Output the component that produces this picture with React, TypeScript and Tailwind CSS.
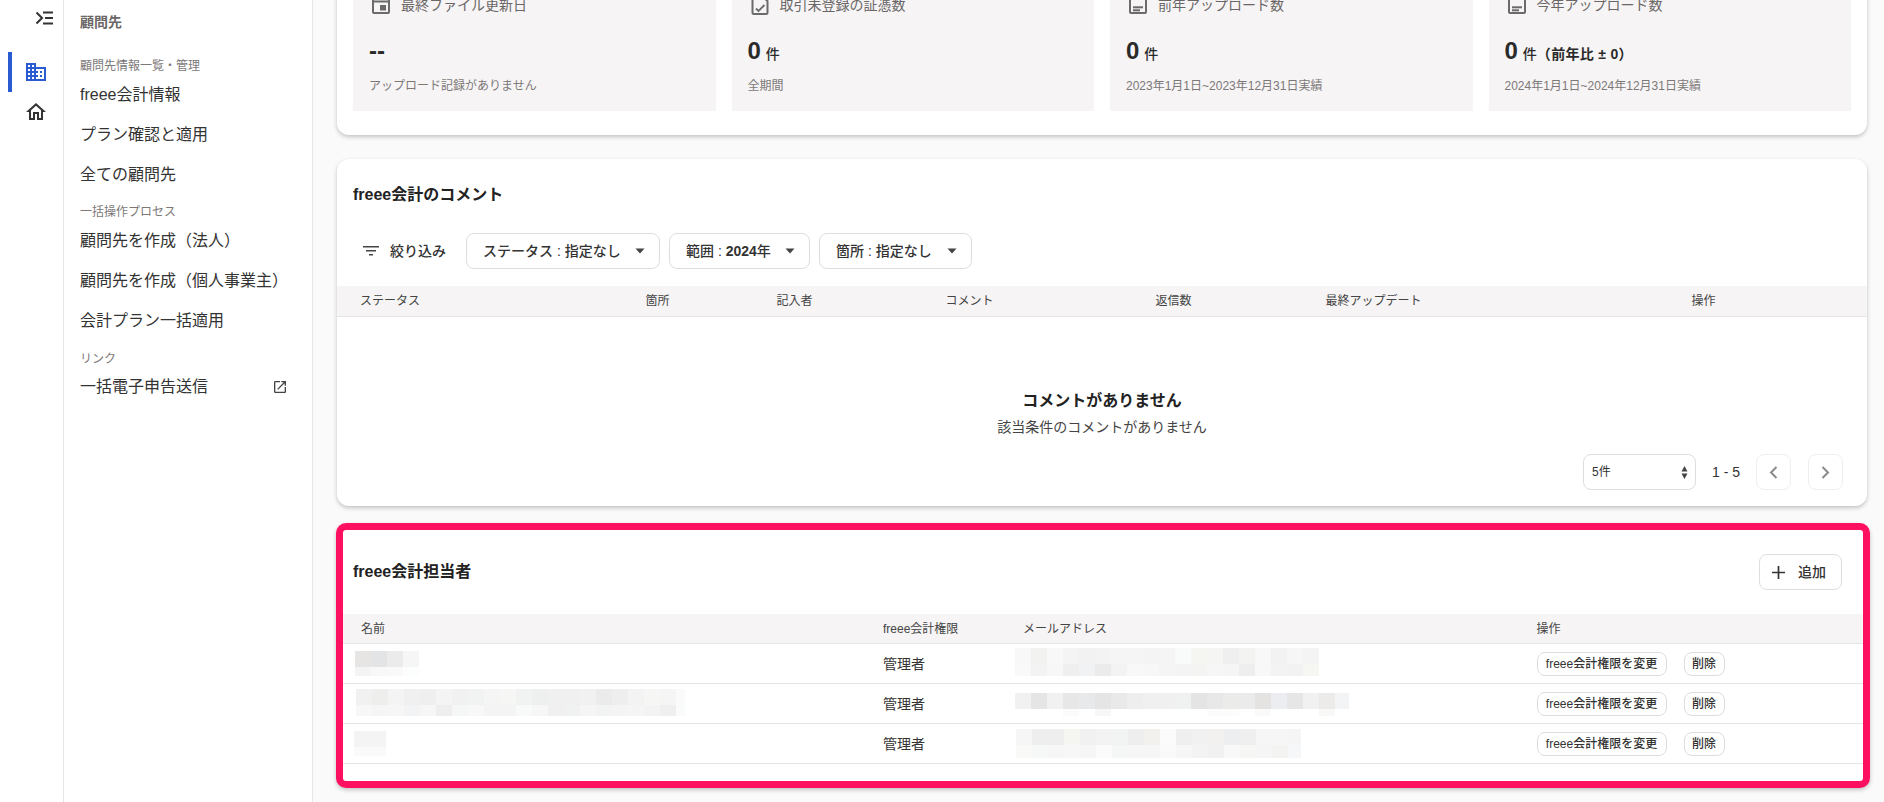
import React from "react";
import { MdDomain, MdOutlineHome, MdOpenInNew } from "react-icons/md";

const W = "ffffff";
const mosaics = {
  n1: { t: ["e6e5e3","e3e4e6","ebebeb","f6f6f6"], b: ["f4f4f4","f8f8f8","f9f9f9","fcfdfd"], w: 16, h1: 16, h2: 9 },
  n2: { t: ["f1f1f1","eeeeec","f4f4f4","f0f0f1","efefef","f4f4f4","f1f1f1","f1f3f2","f5f5f5","f6f6f4","f1f3f2","eef0ef","f0f0f0","f0f0f0","f1f1f1","ebebeb","eeeeee","f3f3f3","f6f6f4","f5f5f5","fafafa"], b: ["f7f7f7","f5f5f5","f6f6f6","f2f3f5","f6f6f6","eeeeee","f5f7f6","f8f8f8","f4f4f4","f4f4f4","f8faf9","f6f6f6","f0f0f0","f0f1f1","f5f5f5","f2f4f3","f4f4f4","f5f5f5","f3f3f3","efefef","fafbfb"], w: 9, h1: 16, h2: 11 },
  n3: { t: ["f4f4f4","f4f4f4"], b: ["fafafa","fafafa"], w: 16, h1: 16, h2: 9 },
  e1: { t: ["f8f8f8","f2f2f0","f8f8f8","f4f4f4","f2f2f2","f3f3f3","f5f5f5","f5f5f5","f4f4f4","f5f5f5","f9fbfa","f5f5f2","f5f5f4","efefef","f3f3f1","f8f8f8","f2f2f3","f6f6f6","f4f4f4"], b: ["f9f9f9","f3f3f3","f7f7f7","efefef","f1f2f4","ebebeb","f3f3f3","f8f8f8","f7f7f7","f5f5f5","f4f4f4","f4f4f2","f6f6f6","f5f5f5","eeeeee","f8f8f8","f3f3f3","f2f2f2","f6f6f3"], w: 16, h1: 16, h2: 12 },
  e2: { t: ["f1f1f1","e5e5e5","f1f1f1","e7e7e7","e8e9eb","e5e5e5","e9e9e9","eeeeee","f0f0f0","f0f0f0","f0f2f1","e4e4e4","e8e8e8","ebebe9","ebebeb","e4e3e1","ecedf0","e6e6e6","f1f1f1","ecebe9","f3f4f6"], b: [W,W,W,"fbfbfb",W,"f7f7f7",W,W,W,W,W,W,"fcfcfc","fcfcfc",W,"fafafa",W,W,W,"f8f8f6",W], w: 14, h1: 16, h2: 7 },
  e3: { t: ["f6f6f6","eeeeee","eeeeee","f5f5f2","f1f1f1","f3f3f3","f2f4f3","eeeeee","f2f1ee","fbfbfb","efefef","f1f1f1","f2f1ef","eceef0","efefef","f6f6f6","f6f6f6","f5f5f5"], b: ["f9f9f7","f6f8f7","f6f6f6","f7f7f7","f6f6f6","fbfbfb","f5f7f6","f6f6f6","f6f6f6","f8f9f8","f6f6f6","f3f3f3","f1f1f1","f8f8f8","f6f6f4","f5f5f5","f3f3f1","f6f7f9"], w: 13, h1: 16, h2: 13 },
};

function Mosaic({ m, className }: { m: { t: string[]; b: string[]; w: number; h1: number; h2: number }; className: string }) {
  const n = m.t.length;
  const width = (n - 1) * 16 + m.w;
  return (
    <svg width={width} height={m.h1 + m.h2} className={className}>
      {m.t.map((c, i) => <rect key={"t" + i} x={i * 16} y={0} width={i === n - 1 ? m.w : 16} height={m.h1} fill={"#" + c} />)}
      {m.b.map((c, i) => <rect key={"b" + i} x={i * 16} y={m.h1} width={i === n - 1 ? m.w : 16} height={m.h2} fill={"#" + c} />)}
    </svg>
  );
}

const Caret = () => (
  <svg width="10" height="6" viewBox="0 0 10 6" className="shrink-0"><path d="M0.5 0.5h9L5 5.5z" fill="#444" /></svg>
);

const IconCal = () => (
  <svg width="24" height="24" viewBox="0 0 24 24" className="shrink-0" fill="none">
    <rect x="4" y="4" width="16" height="16" rx="1" stroke="#6b6b6b" strokeWidth="2" />
    <path d="M4 8.5h16" stroke="#6b6b6b" strokeWidth="2" />
    <rect x="11" y="12" width="6" height="5.5" fill="#6b6b6b" />
  </svg>
);
const IconDoc = () => (
  <svg width="24" height="24" viewBox="0 0 24 24" className="shrink-0" fill="none">
    <path d="M14 3H6a1.5 1.5 0 0 0-1.500 1.500v15A1.500 1.500 0 0 0 6 21h12a1.500 1.500 0 0 0 1.500-1.500V8z" stroke="#6b6b6b" strokeWidth="2" />
    <path d="M8 15.500l2.500 2.500 6-6" stroke="#6b6b6b" strokeWidth="1.800" />
  </svg>
);
const IconList = () => (
  <svg width="24" height="24" viewBox="0 0 24 24" className="shrink-0" fill="none">
    <rect x="4" y="4" width="16" height="16" rx="1" stroke="#6b6b6b" strokeWidth="2" />
    <rect x="7" y="13.300" width="10" height="2" fill="#6b6b6b" />
    <rect x="7" y="16.300" width="7" height="2" fill="#6b6b6b" />
  </svg>
);

function Stat({ icon, title, value, unit, extra, sub }: { icon: React.ReactNode; title: string; value: string; unit?: string; extra?: string; sub: string }) {
  return (
    <div className="bg-[#f6f4f5] pl-4 pt-4 pb-[17px]">
      <div className="flex h-5 items-center gap-2 text-sm text-[#6b6767]">{icon}<span>{title}</span></div>
      <div className="mt-5 flex h-8 items-baseline leading-8 text-[#2a2a2a]">
        <span className="text-2xl font-bold">{value}</span>
        {unit && <span className="ml-[5px] text-sm font-medium">{unit}</span>}
        {extra && <span className="text-sm font-bold tracking-[0.3px]">{extra}</span>}
      </div>
      <div className="mt-[11px] h-4 text-xs leading-4 text-[#7c7878]">{sub}</div>
    </div>
  );
}

const NavItem = ({ children }: { children: React.ReactNode }) => (
  <div className="flex h-10 items-center justify-between pr-6 text-base text-[#333]">{children}</div>
);

const Pill = ({ label, w }: { label: React.ReactNode; w: string }) => (
  <button className={`flex h-9 items-center justify-between rounded-lg border border-[#dedede] bg-white pl-4 pr-[14px] text-sm font-medium text-[#333] ${w}`}>
    <span>{label}</span><Caret />
  </button>
);

const Small = ({ children, w }: { children: React.ReactNode; w: string }) => (
  <button className={`flex h-6 items-center justify-center rounded-lg border border-[#dedede] bg-white text-xs font-medium text-[#333] ${w}`}>{children}</button>
);

const rows = [
  { n: mosaics.n1, e: mosaics.e1, nc: "mt-[7px] ml-3 self-start", ec: "mt-1 self-start" },
  { n: mosaics.n2, e: mosaics.e2, nc: "mt-[5px] ml-[13px] self-start", ec: "mt-[9px] self-start" },
  { n: mosaics.n3, e: mosaics.e3, nc: "mt-[7px] ml-[11px] self-start", ec: "mt-[5px] ml-px self-start" },
];

export default function App() {
  return (
    <div className="flex h-[802px] w-[1884px] overflow-hidden bg-[#fafafa] font-['Liberation_Sans','Noto_Sans_CJK_JP',sans-serif] text-[#333]">
      {/* icon rail */}
      <aside className="w-16 shrink-0 border-r border-[#e6e6e6] bg-white">
        <div className="flex h-9 items-center justify-end pr-[8px]">
          <svg width="20" height="14" viewBox="0 0 20 14" fill="none">
            <path d="M1.500 1.500L7 7l-5.500 5.500" stroke="#333" strokeWidth="2" />
            <path d="M8 1.500h10M10 7h8M8 12.500h10" stroke="#333" strokeWidth="2" />
          </svg>
        </div>
        <div className="mt-4 ml-2 flex h-10 items-center justify-center border-l-4 border-[#2a5bd0] pr-1 text-[#2a5bd0]">
          <MdDomain size={24} />
        </div>
        <div className="ml-2 flex h-10 items-center justify-center border-l-4 border-transparent pr-1 text-[#333]">
          <MdOutlineHome size={24} />
        </div>
      </aside>

      {/* sub navigation */}
      <nav className="w-[249px] shrink-0 border-r border-[#e6e6e6] bg-white pl-4 pt-3">
        <div className="h-5 text-sm leading-5 font-bold text-[#6b6767]">顧問先</div>
        <div className="mt-[26px] mb-px h-4 text-xs leading-4 text-[#7c7878]">顧問先情報一覧・管理</div>
        <NavItem>freee会計情報</NavItem>
        <NavItem>プラン確認と適用</NavItem>
        <NavItem>全ての顧問先</NavItem>
        <div className="mt-[9px] mb-px h-4 text-xs leading-4 text-[#7c7878]">一括操作プロセス</div>
        <NavItem>顧問先を作成（法人）</NavItem>
        <NavItem>顧問先を作成（個人事業主）</NavItem>
        <NavItem>会計プラン一括適用</NavItem>
        <div className="mt-[10px] h-4 text-xs leading-4 text-[#7c7878]">リンク</div>
        <NavItem>
          <span>一括電子申告送信</span>
          <MdOpenInNew size={16} color="#444" />
        </NavItem>
      </nav>

      {/* main */}
      <main className="min-w-0 flex-1 pl-6 pr-[17px]">
        <div className="-mt-[37px]">
          <section className="rounded-xl bg-white p-4 pb-6 shadow-[0_2px_4px_rgba(0,0,0,0.22)]">
            <div className="grid grid-cols-4 gap-4">
              <Stat icon={<IconCal />} title="最終ファイル更新日" value="--" sub="アップロード記録がありません" />
              <Stat icon={<IconDoc />} title="取引未登録の証憑数" value="0" unit="件" sub="全期間" />
              <Stat icon={<IconList />} title="前年アップロード数" value="0" unit="件" sub="2023年1月1日~2023年12月31日実績" />
              <Stat icon={<IconList />} title="今年アップロード数" value="0" unit="件" extra="（前年比 ± 0）" sub="2024年1月1日~2024年12月31日実績" />
            </div>
          </section>

          <section className="mt-6 rounded-xl bg-white pt-6 pb-4 shadow-[0_2px_4px_rgba(0,0,0,0.22)]">
            <h2 className="pl-4 text-base leading-6 font-bold text-[#222]">freee会計のコメント</h2>
            <div className="mt-[26px] flex items-center pl-[26px]">
              <svg width="16" height="10" viewBox="0 0 16 10" fill="none" className="shrink-0">
                <path d="M0 .75h16M3 4.750h10M6 8.750h4" stroke="#444" strokeWidth="1.500" />
              </svg>
              <span className="ml-[11px] text-sm font-medium text-[#333]">絞り込み</span>
              <div className="ml-5 flex gap-[9px]">
                <Pill label="ステータス : 指定なし" w="w-[194px]" />
                <Pill label={<>範囲 : <span className="font-bold">2024</span>年</>} w="w-[141px]" />
                <Pill label="箇所 : 指定なし" w="w-[153px]" />
              </div>
            </div>
            <div className="mt-[17px] grid h-[31px] grid-cols-[285.500px_131px_169px_210px_170px_366px_1fr] items-center border-b border-[#e5e5e5] bg-[#f6f4f5] pl-[23px] text-xs text-[#444]">
              <span>ステータス</span><span>箇所</span><span>記入者</span><span>コメント</span><span>返信数</span><span>最終アップデート</span><span>操作</span>
            </div>
            <div className="mt-[72px] text-center text-base leading-6 font-bold text-[#222]">コメントがありません</div>
            <div className="mt-1 text-center text-sm leading-5 text-[#444]">該当条件のコメントがありません</div>
            <div className="mt-[17px] flex items-center justify-end pr-6">
              <div className="flex h-9 w-[113px] items-center justify-between rounded-lg border border-[#dedede] bg-white pl-2 pr-[7px] text-xs text-[#333]">
                <span>5件</span>
                <svg width="7" height="13" viewBox="0 0 7 13" fill="#444"><path d="M3.500 0L6.500 5.500h-6zM3.500 13L.5 7.500h6z" /></svg>
              </div>
              <span className="ml-4 text-sm text-[#333]">1 - 5</span>
              <button className="ml-4 flex h-9 w-[35px] items-center justify-center rounded-lg border border-[#eeeeee] bg-white">
                <svg width="9" height="13" viewBox="0 0 9 13" fill="none"><path d="M7.500 1L2 6.500 7.500 12" stroke="#8a8a8a" strokeWidth="2" /></svg>
              </button>
              <button className="ml-[17px] flex h-9 w-[35px] items-center justify-center rounded-lg border border-[#eeeeee] bg-white">
                <svg width="9" height="13" viewBox="0 0 9 13" fill="none"><path d="M1.500 1L7 6.500 1.500 12" stroke="#8a8a8a" strokeWidth="2" /></svg>
              </button>
            </div>
          </section>

          <section className="mt-[17px] -ml-px -mr-[3px] rounded-[10px] border-[7px] border-[#ff0f5f] bg-white pt-6 pb-[17px] shadow-[0_2px_4px_rgba(0,0,0,0.22)]">
            <div className="flex h-9 items-center justify-between pl-[10px] pr-[21px]">
              <h2 className="text-base font-bold text-[#222]">freee会計担当者</h2>
              <button className="flex h-9 w-[83px] items-center gap-[13px] rounded-lg border border-[#dedede] bg-white pl-3 text-sm font-medium text-[#333]">
                <svg width="13" height="13" viewBox="0 0 13 13" fill="none"><path d="M6.500 0v13M0 6.500h13" stroke="#333" strokeWidth="1.700" /></svg>
                <span>追加</span>
              </button>
            </div>
            <div className="mt-6 grid h-[30px] grid-cols-[540px_132px_521.500px_1fr] items-center border-b border-[#e5e5e5] bg-[#f6f4f5] text-xs text-[#444]">
              <span className="pl-[18px]">名前</span><span>freee会計権限</span><span className="pl-2">メールアドレス</span><span>操作</span>
            </div>
            {rows.map((r, i) => (
              <div key={i} className="grid h-10 grid-cols-[540px_132px_521.500px_1fr] items-center border-b border-[#e5e5e5] text-sm text-[#333]">
                <Mosaic m={r.n} className={r.nc} />
                <span>管理者</span>
                <Mosaic m={r.e} className={r.ec} />
                <div className="flex gap-[17px]">
                  <Small w="w-[130px]">freee会計権限を変更</Small>
                  <Small w="w-[41px]">削除</Small>
                </div>
              </div>
            ))}
          </section>
        </div>
      </main>
    </div>
  );
}
